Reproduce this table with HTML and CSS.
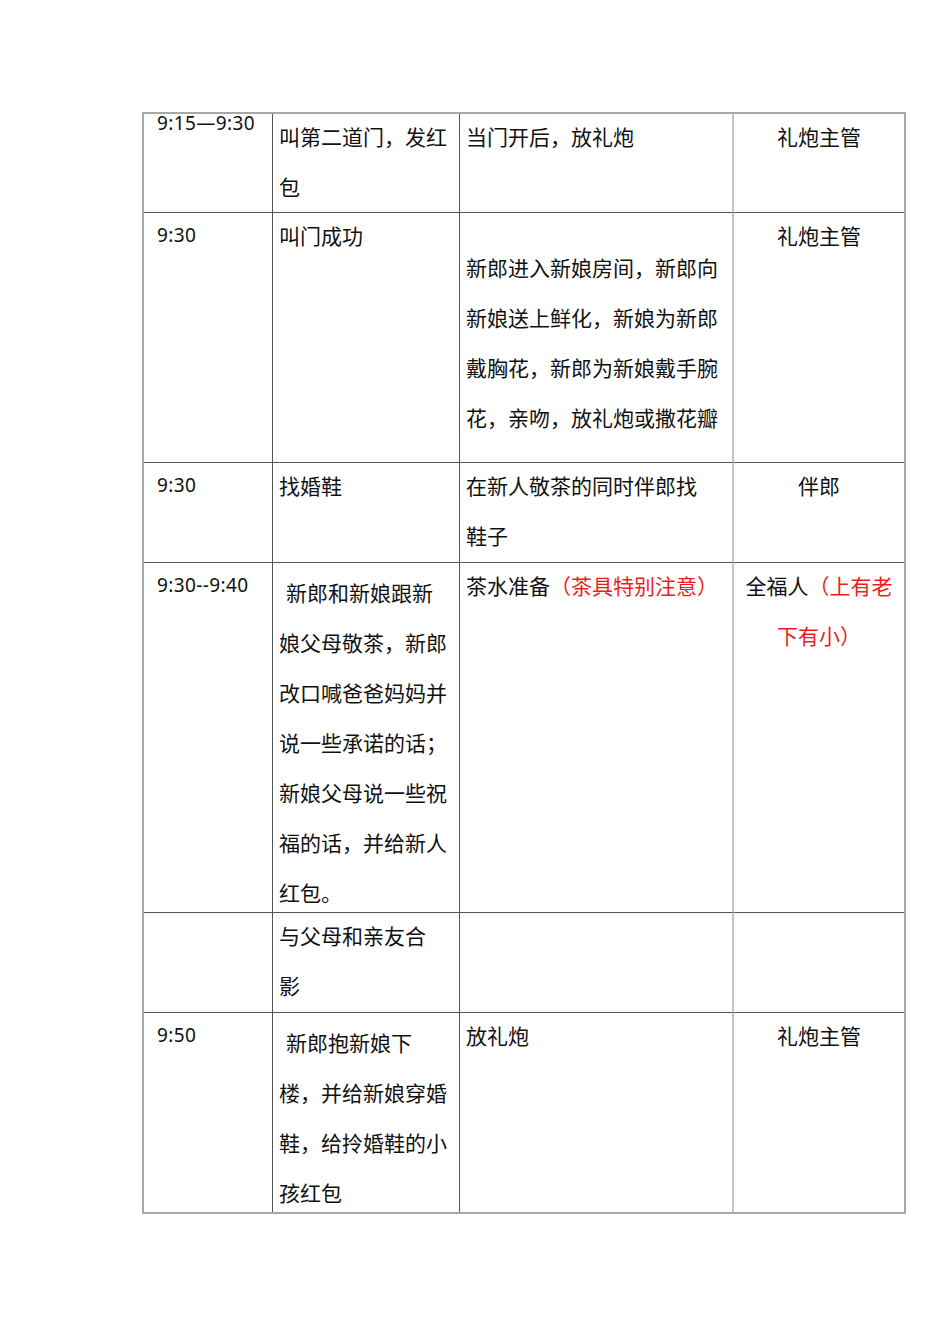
FILE: index.html
```html
<!DOCTYPE html>
<html lang="zh-CN">
<head>
<meta charset="utf-8">
<title>婚礼流程</title>
<link rel="stylesheet" href="styles.css">
</head>
<body>
<div class="page">
  <div class="schedule">
    <div class="cell time time-top">9:15—9:30</div>
    <div class="cell text"><p class="lines">叫第二道门，发红<br>包</p></div>
    <div class="cell text wide"><p class="lines">当门开后，放礼炮</p></div>
    <div class="cell text who"><p class="lines">礼炮主管</p></div>

    <div class="cell time">9:30</div>
    <div class="cell text"><p class="lines">叫门成功</p></div>
    <div class="cell text wide drop"><p class="lines">新郎进入新娘房间，新郎向<br>新娘送上鲜化，新娘为新郎<br>戴胸花，新郎为新娘戴手腕<br>花，亲吻，放礼炮或撒花瓣</p></div>
    <div class="cell text who"><p class="lines">礼炮主管</p></div>

    <div class="cell time">9:30</div>
    <div class="cell text"><p class="lines">找婚鞋</p></div>
    <div class="cell text wide"><p class="lines">在新人敬茶的同时伴郎找<br>鞋子</p></div>
    <div class="cell text who"><p class="lines">伴郎</p></div>

    <div class="cell time">9:30--9:40</div>
    <div class="cell text indent"><p class="lines">新郎和新娘跟新<br>娘父母敬茶，新郎<br>改口喊爸爸妈妈并<br>说一些承诺的话；<br>新娘父母说一些祝<br>福的话，并给新人<br>红包。</p></div>
    <div class="cell text wide"><p class="lines">茶水准备<span class="note">（茶具特别注意）</span></p></div>
    <div class="cell text who"><p class="lines">全福人<span class="note">（上有老<br>下有小）</span></p></div>

    <div class="cell time"></div>
    <div class="cell text"><p class="lines">与父母和亲友合<br>影</p></div>
    <div class="cell text wide"></div>
    <div class="cell text who"></div>

    <div class="cell time last">9:50</div>
    <div class="cell text indent last"><p class="lines">新郎抱新娘下<br>楼，并给新娘穿婚<br>鞋，给拎婚鞋的小<br>孩红包</p></div>
    <div class="cell text wide last"><p class="lines">放礼炮</p></div>
    <div class="cell text who last"><p class="lines">礼炮主管</p></div>
  </div>
</div>
</body>
</html>
```

FILE: styles.css
```css
html, body {
  margin: 0;
  padding: 0;
  background: #ffffff;
}

.page {
  padding: 112px 0 0 142px;
}

.schedule {
  display: grid;
  grid-template-columns: 129px 187px 274px 170px;
  grid-template-rows: 99px 250px 100px 350px 100px 199px;
  width: 760px;
  border: 2px solid #a8a8a8;
  color: #111111;
  font-family: "Noto Sans CJK SC", "Noto Sans", sans-serif;
}

.cell {
  box-sizing: border-box;
  border-right: 1px solid #555555;
  border-bottom: 1px solid #555555;
  white-space: nowrap;
  overflow: visible;
}

.cell.last {
  border-bottom: none;
}

.time {
  padding: 0 0 0 13px;
  font-family: "Noto Sans", "Noto Sans CJK SC", sans-serif;
  font-size: 19px;
  letter-spacing: 0.4px;
  line-height: 44px;
}

.time-top {
  line-height: 18px;
}

.text {
  padding: 0 0 0 6px;
  font-size: 21px;
  line-height: 50px;
}

.lines {
  margin: -3px 0 0;
}

.wide {
  border-right: 2px solid #c4c4c4;
}

.who {
  border-right: none;
  padding: 0;
  text-align: center;
}

.drop {
  padding-top: 32px;
}

.indent {
  padding-top: 7px;
  text-indent: 7px;
}

.note {
  color: #ee1c1c;
}
```
